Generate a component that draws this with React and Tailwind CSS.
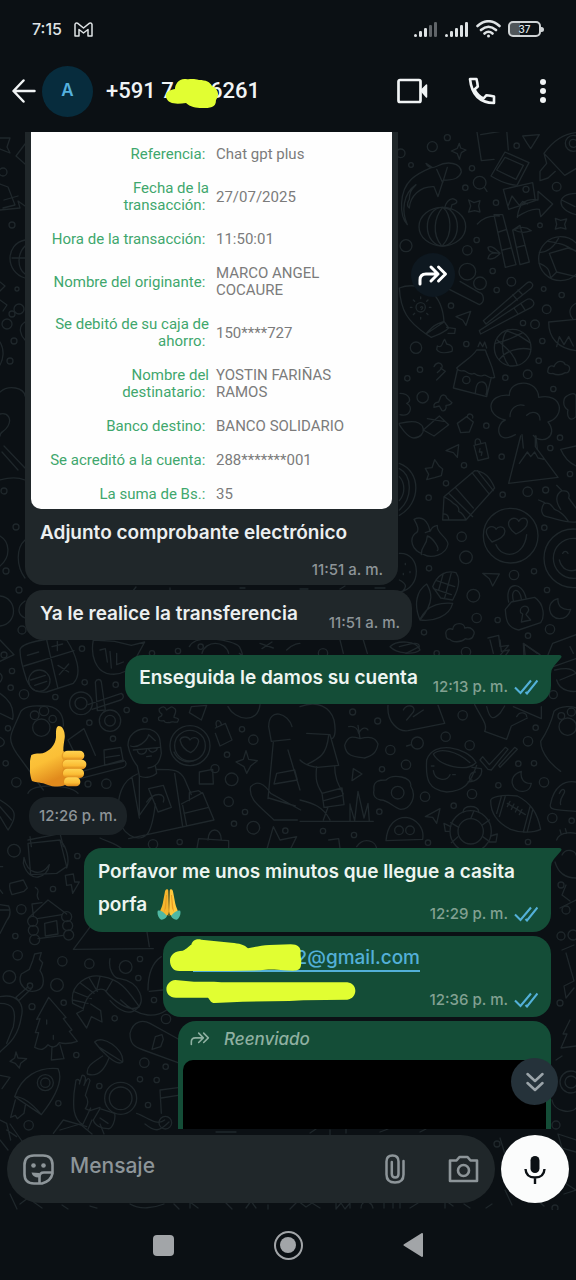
import React from "react";

const smallDots = [
  [3, 172, 4], [12, 225, 3], [12, 314, 3], [17, 289, 2], [19, 309, 5], [7, 324, 5], [14, 341, 3], [10, 361, 3],
  [4, 491, 3], [16, 527, 3], [6, 571, 3], [19, 590, 3], [22, 630, 4], [4, 655, 3],
];

function Bubbles({ items }) {
  return items.map(([x, y, r], i) => <circle key={i} cx={x} cy={y} r={r} />);
}

function Wallpaper() {
  return (
    <svg
      aria-hidden="true"
      className="absolute inset-0 size-full"
      viewBox="0 132 576 1078"
      preserveAspectRatio="xMidYMin slice"
      fill="none"
      stroke="#1f272b"
      strokeLinecap="round"
      strokeLinejoin="round"
    >
      <g strokeWidth="1.3">
        <Bubbles items={smallDots} />
        <path d="M0 138l10 0-3 9 3 6-10-4M25 144l-9 12 9 8M0 184l8 3 7 18-12 3M4 200l14-4M0 210l20-2-2-7 7 5M25 240c-20 4-20 32 0 38M25 246c-8 8-8 22 0 28M12 258h13M0 282l5 4-5 5M0 300l7 5-4 6M25 322c-8 5-4 14 0 18M0 342c5 8 3 18 0 23" />
        <path d="M0 392c9-8 24-4 25 4M0 414c8-2 12 5 8 12s-8 5-8 10M4 446l21 22M2 452l16 18M0 480c10-3 18-3 25 0M0 536c9 5 12 20 0 30M25 540c-9 8-9 26 0 38M0 596c18 2 18 28 0 30M25 601c-9 6-7 14 0 17" />
        <path d="M132 592l4-5M170 588v5M240 588h5M300 589h8M340 589l5-3M375 588h10" />
      </g>

      <g transform="translate(390 130) scale(.333333)" strokeWidth="4">
        <Bubbles
          items={[
            [127, 50, 15], [172, 23, 9], [32, 70, 13], [63, 105, 7], [246, 115, 8], [380, 47, 8], [226, 173, 8],
            [318, 218, 8], [500, 170, 13], [450, 286, 7], [48, 347, 18], [260, 330, 8], [232, 361, 14], [232, 425, 25],
            [270, 460, 19], [308, 423, 8], [364, 455, 13], [320, 480, 8], [461, 477, 7], [515, 495, 8], [470, 538, 13],
            [183, 527, 8], [399, 579, 8], [435, 583, 13], [457, 633, 8], [78, 653, 17], [229, 642, 8], [90, 719, 8],
            [52, 745, 8], [446, 692, 8], [413, 733, 13], [346, 743, 8], [98, 802, 17], [490, 777, 8], [289, 887, 8], [510, 923, 8],
          ]}
        />
        <path d="M260 0l14 92 38-4M272 14l60-10M350 0l5 60M345 66l72 32-36 68c-30-2-52-12-78-28zM345 82l55 24-22 42-58-28zM398 18l50-4-26 42-12-18zM208 40l4 14 16 6-14 8-6 20-6-17-18-8 18-8zM558 8c-40 4-70 26-96 62l62 66 34-20M462 70l8 30-20 24 0 28 24-8 22-20" />
        <path d="M108 100c10 18 22 14 34 8 30-16 70-10 72 18-6 20-30 26-54 24l-16 50-12-30C90 168 60 200 58 234c-8-6-6-16 0-26 0-20 6-30 20-44-40 28-44 80-26 120-24-26-26-100 12-136 20-20 48-30 62-36zM140 118l18 40 14-46" />
        <circle cx="269" cy="158" r="19" /><path d="M283 172l8 12M340 178l88-20 8 54-80 26zM354 228l12-30 22 28 10-12 14 8M382 262c4-40 22-58 62-52v-26l44 38-36 38-4-22c-20-4-44 8-66 22zM558 190c-60 0-60 50 0 64M515 210l40 20M236 210l16 8 18-6-4 16 4 18-16-4-18 4 6-18zM496 265l16 6 18-4-6 16 4 14-16-4-16 4 4-14z" />
        <circle cx="408" cy="178" r="9" /><circle cx="550" cy="40" r="24" /><circle cx="550" cy="40" r="12" />
        <ellipse cx="157" cy="290" rx="70" ry="58" /><ellipse cx="157" cy="290" rx="45" ry="58" /><path d="M158 232c-26 30-32 82-4 114M158 232c26 20 32 80 0 114M164 234c4-18 12-26 24-28 18 6 16 14-2 18l-4 14z" />
        <path d="M312 254l34 158 32-8-40-150zM262 282c18-20 38-26 66-24M326 306l24-8M338 360l24-6M368 300l22 104 28-8-28-110zM372 300c20-12 36-10 52 2-18 6-30 8-52-2M330 370c-16-16-26-24-36-18 0 12 14 18 36 18-20-4-34 0-36 16 16 4 26-4 36-16M380 352l24-6" />
        <circle cx="512" cy="386" r="66" /><path d="M474 334c36 4 50 10 84 30M448 368c26-2 46-20 58-44M478 370l22 56 58 14M478 370l56-16 24 8M500 426l-18 18M448 400c26 10 30 20 34 44" />
        <path d="M280 572l130-112c12-10 24 4 14 14L288 582zM268 602l140-92c16-10 34 10 16 22L272 612zM368 494l14 16M384 480l14 14M372 534l12 18M392 520l12 18" />
        <path d="M178 478l90 46c20-8 12-34 0-36l-58-34M28 474c4 70 26 100 80 138l54-36c-2-40-14-70-40-92-20-14-60-24-94-10zM108 612c20-24 30-30 54-38l14 20c-16 16-34 20-52 28zM170 592l26 4-2 14h-20" />
        <circle cx="92" cy="532" r="14" /><path d="M92 532c4-6 10 2 2 6M92 506v-5M92 562v5M66 532h-5M118 532h5M74 514l-4-4M110 514l4-4M74 550l-4 4M110 550l4 4M198 560l44-16-14 42-10-16zM142 648c16 8 14-12 22-20l6 14c14 2 20 10 16 22-18 6-38 6-46-6zM476 576l82-8M476 576c0 50 30 80 82 86M500 650l8-30 14 24 14-24 14 28M558 520c-20 10-24 30-10 46" />
        <circle cx="368" cy="653" r="55" /><path d="M316 640c34-6 60-20 82-32M328 688c20-26 60-38 94-30M352 600c-20 24-20 76 4 106M350 602l36 14 34 22M322 630c30 28 50 40 60 76" />
        <path d="M200 714c26-24 46-32 60-54l26 0c8 26 20 40 28 82M200 714c10 16 18 4 26 10s16 12 26 6c10 8 18 10 28 6s20 14 34 6M202 720l-12 54 100 26 14-58M256 790c2-30 10-36 22-34s16 20 10 38M264 650l6-14 8 14 6-14 6 18M474 720c0-14 14-14 18-10 8-20 28-20 34-6 20 0 14 28 0 24-16 10-30 6-38 2-8 2-18 0-14-10z" /><circle cx="229" cy="750" r="11" />
        <path d="M132 710c6-14 20-14 24-4s-8 14-14 22M152 714l14 10-26 26M152 800c6-8 16-6 18 4l16 14c-4 8-10 8-18 8 2 12-4 18-12 16l-8-14-16 4c-2-12 4-14 14-16z" />
        <path d="M376 914c-60 34-60-34-30-44-64-14-54-80 12-74 0-50 86-50 88 6 74-16 80 60 28 74 34 44-20 70-44 40M360 860c0-24 20-40 42-34M410 856c16-16 40-10 40 14M396 914l4 40M438 918l4 40M528 800c30-20 30 0 30 0v60c-20 20-28-4-24-20-20-14-12-36-6-40" />
        <path d="M30 790c30 0 36 26 20 30 22 10 10 42-20 34M28 880l24-4c60-10 60 46 20 48-20 0-44-40-44-40M100 900l48-42 28 26-44 34zM112 866l48 8 6 0M202 880l28-20 20 16-12 30-26 2zM232 860c0-14 20-8 16 4" />
      </g>

      <g transform="translate(390 400) scale(.333333)" strokeWidth="4">
        <Bubbles
          items={[
            [335, 170, 8], [222, 196, 8], [168, 250, 8], [116, 293, 8], [338, 284, 8], [413, 275, 14], [467, 270, 9],
            [215, 410, 14], [228, 472, 19], [117, 505, 8], [250, 587, 19], [260, 654, 14], [323, 660, 8], [372, 525, 14],
            [432, 514, 8], [471, 570, 8], [480, 688, 14], [102, 697, 8], [414, 707, 8], [463, 383, 8], [481, 144, 8], [540, 222, 8],
          ]}
        />
        <path d="M168 152l38-18-4 38-12-14zM252 136l34-8 10 46-32 8zM256 132c-4-20 14-20 16-4M270 146l-2 10 8 0-2 10M106 205l20-2 8-24 14 20 10 8-4 20-20 6-24 6 6-16zM392 108l-36 142 148-18-68-92v-32M388 190l24-34 10 14 12-14 10 18 18 4M558 138l-46 10c10 24 24 40 46 50" />
        <path d="M158 360l4-70 92-78c30 2 46 20 60 52l-86 96zM162 290c12 8 20 10 28 20 12 6 18 16 16 24 10 4 16 12 22 26M176 280l72 70M196 262l54 62M246 218l50 62M262 212l48 60M162 342c8 0 14 6 14 18M28 190c66 24 66 120 0 156M28 206c40 20 40 90 0 124M28 230c18 20 18 50 0 72" />
        <path d="M72 358c24-12 42 4 48 36 6-16 14-16 22-18-4 24 30 34 32 56-6 34-50 44-72 32-40-14-44-48-26-64 16-8 4-28-4-42zM94 464c-2-28 16-22 18-56 16 4 40 40 30 44M106 398l16-6" />
        <circle cx="362" cy="407" r="82" /><path d="M306 426c-16-16-22-34-12-42 12-8 22-2 24 4 8-12 24-8 26 2 4 16-14 28-38 36zM378 402c-20-14-28-30-18-42 10-10 24-4 26 4 8-14 24-12 26 0 2 16-16 30-34 38zM318 434c20 46 84 38 92-30" />
        <circle cx="550" cy="475" r="88" /><circle cx="550" cy="475" r="60" /><path d="M518 460c4-8 12-8 16 0M508 480c8 30 30 36 50 30M446 300l18 8c-16 20-8 40 6 42 40 10 60 20 88 16M466 310c18-4 20 12 28 18 16 6 30 18 40 34M500 256l16 16c-24 14-16 38-4 56M516 272c20 0 24 10 20 22l22 30" />
        <path d="M28 460c66-4 70 106 0 116M28 540c20 10 24 20 10 34M46 490v4M60 514v4M40 520v4M110 552c-30 20-40 60-20 108 50-60 30-90 20-108zM90 658c24-50 70-50 98-48-10 40-60 56-98 50zM128 560c14-36 40-50 70-42 18 24 2 60-10 82l-36-6zM140 542l54 18M130 566l54 18M160 520l-14 50M184 518l-20 76M278 520l50 2-20 36-10-22zM346 628l18-22 70-14c30 20 30 60 18 76l-66 22c-40-8-38-40-40-62zM356 606c-14-60 40-66 52-12M370 602c-10-40 20-40 24-6M392 638c-6-20 22-28 24-8-2 8-8 10-8 14l14 16-28 6 4-24zM504 596c-40 10-28 60 4 60 20 0 30-14 34-28-24 4-40-10-38-32zM168 704c-4-16 12-20 20-16 4-24 36-20 36-4 20-6 34 10 26 22-2 14-20 12-24 10-16 14-40 10-46 2-8 0-12-6-12-14z" />
        <path d="M294 714l32-8 4 34 26-4-26 30M400 730l2 40M400 730l50 34M558 704l-70 26-14 34M28 740c20-4 60-20 60 0l-40 20M540 740l10 20" />
      </g>

      <g transform="translate(0 640) scale(.333333)" strokeWidth="4">
        <Bubbles
          items={[
            [72, 163, 14], [32, 143, 8], [36, 93, 8], [166, 171, 8], [254, 127, 8], [347, 134, 8], [246, 26, 8], [380, 210, 8],
            [268, 248, 8], [339, 296, 8], [435, 240, 7], [24, 265, 8], [17, 370, 8], [49, 427, 14], [264, 432, 9], [319, 431, 14],
            [243, 190, 34], [243, 190, 18], [330, 242, 32], [330, 242, 16], [132, 213, 14], [158, 237, 11], [104, 226, 13], [124, 263, 26],
            [570, 317, 60], [570, 317, 46], [726, 268, 8], [760, 299, 14], [681, 344, 8], [695, 418, 19], [686, 485, 14], [735, 516, 8],
            [702, 551, 8], [760, 563, 19], [856, 572, 8], [539, 606, 8], [459, 613, 14], [602, 20, 8], [456, 40, 8], [534, 33, 8], [645, 386, 12],
          ]}
        />
        <path d="M60 30c2-20 80-40 140-30 26 40 50 100 20 130l-80 26c-40 4-50-14-60-36-10-30-20-60-20-90zM72 78l150-46M140 0l34 146M82 46l34-10M156 20l32-8M172 4v28M92 120l44-14M104 136l36-12M174 76l32 20M206 72l-28 32M0 0l42 44-42 20M0 100c12 10 4 22 0 26M0 160c30 20 44 44 38 78l-38-18M0 292c20 10 14 24 0 28" />
        <circle cx="118" cy="122" r="32" />
        <path d="M280 0c-10 50 10 90 40 100 40 10 80-10 90-50l24-44-40 10-50-12zM300 30l16-4 6 40M330 34l4 50M350 40v34l20-8M286 126c4-10 16-10 18 0l12 84-24 2zM264 194l100-34c10 6 6 18-2 20l-86 28M60 220c-24 60-44 70-10 120l80 110M60 220c6-20 40-24 62-22 50-4 70 24 68 60M204 300l48-34 34 80M204 300l20 40M210 404l160-44c12 6 10 18 0 22l-154 40M312 330l50-8 8 42-56 12zM318 352l40-6" />
        <path d="M384 316c0-60 90-66 96-14l4 38c-6 30-16 40-40 44M384 316c4 20 10 40 28 62l6 30c20 10 44 0 52-8l-4-24M392 318c20 8 50-14 54-34l20 18M400 330l80-8M412 332c4 16 26 12 28-4M446 328c6 14 24 8 26-4M440 350l14-2M412 402c-50 20-58 70-60 120 10 60 60 90 90 60 16-20 20-60 24-90M418 408l0 118 40-56M396 412l22 122M470 388c50 0 70 0 84 30l20 46M524 400l24 160M446 446l44-10 24 66-40 14zM440 486c20-30 60-30 50 0M386 596l256-56-34-82-64 34M568 482l0-24 28-6 10 8M552 520l74-18M548 496l12 62" />
        <path d="M540 300c6-14 26-10 30 0 6-10 24-10 26 4-4 20-14 28-24 34-14-6-28-20-32-38zM522 336c10 26 40 34 60 26M478 206c10-8 16-8 22 4 14-10 14-14 26-2 4 12-4 14-4 24 16 4 16 6 10 14-12 2-18-4-22 2-8-2-14 4-18-6-14 2-18 0-16-10 8-2 10-4 10-10-8-4-10-8-8-16zM574 200l46-4-16 44-36-22zM646 264l30-14 20 50-36 18-14-38M650 260c-8-22 12-24 14-6M738 332l8 26 26 4-20 16-12 22-8-20-24-14 22-8zM598 396l40-8 2 44-42 0z" />
        <path d="M806 260c0-60 60-40 70 0M806 260l8 44 56-6M820 306l-16 170M864 330l36 120M830 400l54-10 8 30-70 12zM752 440c20-20 40-10 60 20l90 50M752 440c-8 40 30 60 70 100l70 0M806 474l80 24M0 480c40 24 60 40 24 90l-24-40M0 500l34 40M84 460c10-30 120-30 150 0M84 600l100-20M90 590l4 30M180 580l10 40M590 630l6-34 90 6 0 28M624 600c0-40 40-40 40 0M800 630l20-70 20 40 50-10-20 40M300 594c20 10 50 16 70 36M568 20c20-40 130-20 150 0 20 40 0 20 0 20M606 40c10-40 70-40 80 0M780 10l40 14M786 26l30-20M860 30c20-20 40-20 40-20M684 200c20 40 90 54 96-6" />
      </g>

      <g transform="translate(300 640) scale(.333333)" strokeWidth="4">
        <Bubbles
          items={[
            [158, 216, 9], [233, 243, 9], [488, 226, 14], [352, 309, 18], [437, 290, 14], [271, 330, 14], [509, 316, 14], [318, 374, 14],
            [246, 388, 8], [375, 470, 14], [238, 515, 8], [516, 462, 14], [461, 497, 8], [595, 436, 8], [655, 371, 8], [702, 370, 8],
            [684, 304, 14], [707, 263, 8], [732, 427, 14], [757, 534, 14], [815, 542, 8], [384, 608, 8], [684, 606, 8], [162, 585, 8],
            [69, 573, 8], [297, 571, 13], [330, 571, 13], [69, 40, 14], [410, 40, 8], [498, 36, 14], [760, 164, 12], [293, 458, 19],
          ]}
        />
        <path d="M0 200c50-20 90 0 102 40 8 40 0 60-10 54M20 280l70 4 26 92-64 6C30 380 10 370 0 360M20 374c40-20 60-30 66-88M50 380c-6 50 6 60 16 80M104 378c0 40 14 60 26 84M66 460l60-16 6 50-60 8zM72 482l56-16M84 502l-14 38M150 492l0 50M0 544h220M150 494l14 48 10-88 18 80 12-44 4 54M0 480c40 10 70 20 90 60" />
        <path d="M134 316c10-32 26-26 46-20 30-8 46-4 54 16-4 24-14 34-40 42-30-4-56-4-60-38zM180 296l-6-40M146 260c20-4 28 10 30 20M176 280c10-20 24-18 28-10M160 386l26 16-30 20zM222 450c-4-30 20-30 36-30 20-20 80-10 74 18 20 30 0 70-30 70-20-4-40-30-60-28-16-2-24-14-20-30zM258 602c4-50 30-70 60-70 30 4 56 30 50 66zM376 530l44-24-10 44-12-18zM320 318l14-4" />
        <path d="M380 360c-4 60 6 90 60 96 50-4 70-20 90-80M380 360c20-60 120-40 148 8-30 30-110 10-128-26 20-20 70-10 110 26M516 382l28 4c6 20-14 40-40 40M516 420c-14 4-8-24 10-24M400 392c4 30 40 34 50 12M394 378h8M458 404h8M548 350l20 24 48-52 8 6-50 62-10-2-24-28zM596 376l48-54 8 6-52 54zM664 394c-46 14-28 64 6 60 14 0 22-12 24-24-22 2-34-14-30-36z" />
        <path d="M572 482c0-10 30-20 80-14 40 20 60 50 70 100-20 10-60 12-90 0-40-20-60-50-60-86zM604 470l-14 50M616 468l-18 62M690 500l-20 76M698 510l-16 64M622 490l54 34M622 500l8-16M634 508l8-16M646 516l8-16M658 524l8-16M782 394c-20-14-60-50-60-90 20-30 30-50 40-90 20-20 60-14 66-10M752 490c10-50 40-70 76-64M752 490c-6 20 10 20 76 24M778 460c10-20 20-10 14 0s-14 20-10 34" />
        <circle cx="803" cy="260" r="26" /><circle cx="784" cy="228" r="10" /><circle cx="814" cy="216" r="12" /><circle cx="512" cy="574" r="62" /><circle cx="512" cy="574" r="38" />
        <path d="M490 516c-4-22 48-22 46 0M452 560l-20-10 4 24 12 0M572 588l20-6-4 24-20 0M512 536l10-24M476 562l-24-14M546 556l22-16M548 590l20 14M474 590l-20 18M264 196c-4 50 30 80 60 76l110-22-20-54M310 210c10-20 40-14 30 6l-20 24M340 230l30-20M524 194c20 40 40 60 30 80l66 24 14-40 48-24M560 200c10 40 20 40 40 20l14-22M640 200l84 36 0-36M650 230c10-20 30-10 30 0M120 0l10 40M190 0l12 40M270 20c20-20 80-20 90 10-20 16-70 10-90-10zM570 0l10 40M600 0l4 34 24-4-14 20M672 12l4 40M672 12l40 28M760 80l68-24M764 90c20-4 50-10 64 10M770 120c10 40 58 34 58 34M780 120l48-20M86 600l30-4 4 30M170 620c20-30 60-20 60 10M770 600c10-30 58-20 58-20M780 570l4 14M796 566l4 14" />
      </g>

      <g transform="translate(0 840) scale(.333333)" strokeWidth="4">
        <Bubbles
          items={[
            [42, 32, 19], [232, 48, 8], [159, 147, 8], [64, 208, 14], [46, 288, 8], [53, 346, 14], [28, 411, 19], [187, 364, 14],
            [268, 371, 14], [377, 381, 19], [420, 357, 8], [415, 414, 8], [171, 435, 19], [90, 437, 8], [96, 500, 9], [191, 488, 8],
            [462, 480, 8], [344, 535, 8], [498, 537, 14], [229, 645, 8], [433, 668, 14], [497, 680, 8], [420, 718, 8], [470, 720, 8],
            [298, 738, 8], [175, 790, 8], [86, 856, 14], [444, 795, 8], [136, 728, 24], [136, 728, 14], [362, 775, 48], [362, 775, 34],
            [98, 244, 15], [100, 271, 15], [104, 299, 15], [200, 230, 15], [203, 257, 15], [206, 285, 15],
          ]}
        />
        <path d="M84 10l96-10 20 80-30 20-78 4zM180 0c20 20 30 60 20 84M72 52c10 50 50 60 76 22-4 40-60 60-78-4zM30 130l40-10 12 24-10 10-36 10c-6-14-10-20-6-34zM196 106l24-4 4 24 14 0-20 34-4-26-14 2zM106 142c20 12-4 20 10 36M96 192l30-4M96 192l4 34M88 232l56-52 56 42M134 250l36-8 4 40-38 6zM112 236l74-12M114 296l76-10M0 194l26 4c6 14 6 30-6 44L0 280M0 210h30M0 80l8 0M0 150l8 10M220 328l60-80M220 328l240-2M440 270l8 50M330 356c-6 30 10 60 30 60 60 10 80 70 50 90-20 20-50 10-80-24" />
        <path d="M104 342l20-4-6 20 10 10-8 24c10 14 20 50-10 60-30 10-60-20-46-50l24-14 10-26zM84 440l-36 32 8 10 38-36M0 470c50-10 74 20 64 60-10 70-50 90-64 106M0 490c40 0 50 20 40 70l-20 50M146 472l-36 66 10-2-14 42 10 0-12 44c20 10 28 8 40-8 10 10 24 10 34-6 14 4 30 4 54-4l-24-30 8-4-26-34 8-4zM156 620l-2 40 38-4-12-42M140 540v12M160 586v12M48 636l6 18 26 2-18 14-4 14-12-14-16-6 14-10z" />
        <path d="M218 490c-10-60 50-90 90-80 60 10 80 50 110 90-30 20-80-20-104-50-20-10-54 10-64 56zM218 480l46 10M224 456l50 20M242 430l40 30M268 414l24 40M300 410l-10 40M338 420l-20 34M250 510l-20 10 30 44 14-34 32 16-4-34-30-20M362 480c60 60 110 50 138 30M444 450c0-40 10-80 40-100M448 454l40-4" />
        <path d="M390 580c10-40 40-40 60-30l90 50M390 580c0 30 10 40 40 50l110 40M466 590l20-6 4 14-8 22-26 8zM284 606c20-24 90 20 84 60-20 16-70-40-84-60zM298 622l70 44M308 648c-30 20-50 30-46 54 30 10 50-10 64-46M44 770c20-60 70-90 130-84 20 40-20 100-50 138zM44 770c30 0 60 30 80 54M46 780l-14 52 14-6 6 10 20-16 4-24M0 706l30 6-24 34" />
        <path d="M222 760l6-40c8-4 14 2 10 12l8-26c10-2 14 8 6 30 10-24 14-24 18-14l-14 44c16 20 0 40 0 40l14 6 30-10M222 760c0 20-10 70 26 94l24-50M280 840l20-34 44 14c4 20-8 48-20 46-20 0-40-10-44-26zM300 834l24 16M410 820c30 10 60 40 84 20M264 868l12-28M160 880l30-40 70 20M480 750l60-8M480 750l4 70M484 774l50-8M0 840l20 10 12 50M20 870l30 20" /><circle cx="496" cy="848" r="19" />
      </g>

      <g strokeWidth="1.3">
        <Bubbles items={[[561, 885, 3], [566, 910, 4], [573, 935, 5], [561, 936, 4], [556, 1125, 4], [560, 1003, 3], [571, 1082, 6], [571, 1082, 11], [497, 1144, 3], [555, 1208, 3]]} />
        <path d="M562 855c4-8 14-4 14 0M555 862c4 14 14 16 21 16M566 885l-4 10 8 6M560 908l16-8M562 950l12-5M566 953l8 28-10 5 2 12 8-10M570 1020l-7 14 4 0-6 14 15-2M552 1100c2 12 20 14 24 8M556 1060l6-4M576 1140l-18-6 4 14 14 4M500 1138l8 26 10-8 4 20M560 1180l16 10-12 4M505 1190l7 15M520 1186l24 20" />
        <path d="M0 1140l8 10M10 1124l14 20M60 1130l20-6 12 10M100 1124l4 10M145 1124c10 8 14 8 24-2M10 1194l7 15M20 1204l8-6 14 10M62 1205l6 4M90 1206l7 2M130 1204c10 6 24 4 34 0M174 1204l5 5M190 1208v-6l8 6M226 1203l6 6M246 1208l5-7 5 7M268 1205v4M290 1209l8-8 8 6 6-4 8 5M336 1203v6l5-6 4 6 5-6v5M361 1208c0-8 10-8 12 0M384 1208v-5M393 1208v-6h7v6M410 1208l8-5M445 1208v-8l8 6M464 1204l6 4M486 1208l6-4M216 1132h20M310 1133l6-4M330 1130v5M346 1133v-4M380 1132l8-3M420 1132l6-3" />
      </g>
    </svg>
  );
}

function Ticks() {
  return (
    <svg className="h-4 w-6 shrink-0" viewBox="0 0 24 16" fill="none" stroke="#53b0d8" strokeWidth="2.1" role="img" aria-label="Leído">
      <path d="M1 8.500l5.500 5.500L17 1.500M11.500 13l1.500 1.500L23.500 1.500" />
    </svg>
  );
}

function Time({ children, read }) {
  return (
    <span className={read ? "flex shrink-0 items-center gap-[6px] text-[#82a192]" : "flex shrink-0 items-center text-[#8d9498]"}>
      <time className="text-[15px] leading-[18px] font-medium whitespace-nowrap">{children}</time>
      {read && <Ticks />}
    </span>
  );
}

function Tail() {
  return (
    <svg className="absolute top-0 left-full h-[19px] w-[11px]" viewBox="0 0 11 19" fill="#144d37" aria-hidden="true">
      <path d="M-1 0H8.500Q12 .5 9.500 3.500L3 11Q0 14.500 0 19H-1z" />
    </svg>
  );
}

function ThumbsUp() {
  return (
    <svg className="mt-[22px] ml-[5px] h-[61px] w-[57px]" viewBox="88 258 171 183" role="img" aria-label="Pulgar arriba">
      <defs>
        <linearGradient id="palm" x1="0" y1="0" x2=".3" y2="1">
          <stop offset="0" stopColor="#ffd04a" />
          <stop offset=".65" stopColor="#fbbf36" />
          <stop offset="1" stopColor="#e18a1c" />
        </linearGradient>
        <linearGradient id="finger" x1="0" y1="0" x2="0" y2="1">
          <stop offset="0" stopColor="#ffd453" />
          <stop offset=".6" stopColor="#fbbd35" />
          <stop offset="1" stopColor="#d98317" />
        </linearGradient>
      </defs>
      <path fill="url(#palm)" d="M92 345c10-5 24-4 34-5 22-7 38-25 40-48 0-16-1-32 8-34 14 0 20 20 18 36-2 14-4 24-4 38l12 20v78c-10 12-40 12-60 4-16-7-34-6-46-11-8-20-10-54-2-78z" />
      <path fill="#d88a1c" opacity=".55" d="M190 334c-10 8-8 20-2 26-6 10-6 18 0 26-6 10-4 18 2 24-4 8-2 18 4 26l12-2V336z" />
      <rect x="187" y="332" width="64" height="29" rx="14" fill="url(#finger)" />
      <rect x="186" y="359" width="71" height="29" rx="14" fill="url(#finger)" />
      <rect x="187" y="386" width="63" height="28" rx="13" fill="url(#finger)" />
      <rect x="190" y="412" width="49" height="27" rx="13" fill="url(#finger)" />
    </svg>
  );
}

function FoldedHands() {
  return (
    <svg className="h-[31px] w-6" viewBox="0 0 72 94" role="img" aria-label="Manos juntas">
      <path fill="#f5b62e" d="M33 2c-6-3-9 2-10 10l-6 32c-2 10-6 16-8 24l14 16c8-2 12-8 13-16z" />
      <path fill="#ffc93d" d="M39 2c6-3 9 2 10 10l6 32c2 10 6 16 8 24L49 84c-8-2-12-8-13-16z" />
      <path fill="#d98a1d" d="M35 4h2v78h-2z" />
      <path fill="#e89c23" d="M27 18l3 0-3 40-6 12 2-14zM45 18l-3 0 3 40 6 12-2-14z" />
      <path fill="#4fb8a3" d="M2 66c8-4 18 4 28 16-4 8-10 11-18 11C4 88-1 76 2 66zM70 66c-8-4-18 4-28 16 4 8 10 11 18 11 8-5 13-17 10-27z" />
    </svg>
  );
}

function ForwardIcon({ className, width }) {
  return (
    <svg className={className} viewBox="0 0 30 22" fill="none" stroke="currentColor" strokeWidth={width} strokeLinecap="round" strokeLinejoin="round" aria-hidden="true">
      <path d="M2 20v-4q0-6 6-6h12M13 3l7 7-7 7M20.500 3l7 7-7 7" />
    </svg>
  );
}

const receipt = [
  [["Referencia:"], ["Chat gpt plus"]],
  [["Fecha de la", "transacción:"], ["27/07/2025"]],
  [["Hora de la transacción:"], ["11:50:01"]],
  [["Nombre del originante:"], ["MARCO ANGEL", "COCAURE"]],
  [["Se debitó de su caja de", "ahorro:"], ["150****727"]],
  [["Nombre del", "destinatario:"], ["YOSTIN FARIÑAS", "RAMOS"]],
  [["Banco destino:"], ["BANCO SOLIDARIO"]],
  [["Se acreditó a la cuenta:"], ["288*******001"]],
  [["La suma de Bs.:"], ["35"]],
];

function Receipt() {
  return (
    <div className="rounded-b-[10px] bg-[#fefefe] pt-[14px] pb-[6px]">
      <table className="w-full font-[Roboto,sans-serif] text-[15px] leading-[17px]">
        <tbody>
          {receipt.map(([label, value]) => (
            <tr key={label[0]} className="group">
              <th scope="row" className="w-[178px] p-0 pb-[17px] text-right align-middle font-normal whitespace-nowrap text-[#3fa76d] group-last:pb-0">
                {label.map((line) => (
                  <span key={line} className="block">{line.endsWith(":") ? line + "\u00a0" : line}</span>
                ))}
              </th>
              <td className="p-0 pb-[17px] pl-[7px] align-middle text-[#7b7b7b] group-last:pb-0">
                {value.map((line) => (
                  <span key={line} className="block">{line}</span>
                ))}
              </td>
            </tr>
          ))}
        </tbody>
      </table>
    </div>
  );
}

function StatusBar() {
  return (
    <div className="flex h-[58px] items-center pr-8 pl-8 text-[#dfe3e5]">
      <span className="text-[16px] leading-5 font-medium">7:15</span>
      <svg className="ml-3 h-[15px] w-[19px]" viewBox="0 0 19 15" fill="none" stroke="currentColor" strokeWidth="1.500" strokeLinejoin="round" aria-label="Gmail" role="img">
        <path d="M1 14V2.500Q1.500.5 3.500 1.200L9.500 6l6-4.800Q17.500.5 18 2.500V14h-4V7.500L9.500 11 5 7.500V14z" />
      </svg>
      <div className="ml-auto flex items-center gap-[7px]">
        <svg className="h-4 w-6" viewBox="0 0 24 16" fill="currentColor" aria-hidden="true">
          <rect x="0" y="13" width="3" height="3" rx="1.500" /><rect x="5" y="10" width="3" height="6" rx="1.300" /><rect x="10" y="7" width="3" height="9" rx="1.300" />
          <g opacity=".4"><rect x="15" y="4" width="3" height="12" rx="1.300" /><rect x="20" y="1" width="3" height="15" rx="1.300" /></g>
        </svg>
        <svg className="h-4 w-6" viewBox="0 0 24 16" fill="currentColor" aria-hidden="true">
          <rect x="0" y="13" width="3" height="3" rx="1.500" /><rect x="5" y="10" width="3" height="6" rx="1.300" /><rect x="10" y="7" width="3" height="9" rx="1.300" /><rect x="15" y="4" width="3" height="12" rx="1.300" /><rect x="20" y="1" width="3" height="15" rx="1.300" />
        </svg>
        <svg className="h-[18px] w-[25px]" viewBox="0 0 25 18" fill="none" stroke="currentColor" strokeWidth="2.600" strokeLinecap="round" aria-hidden="true">
          <path d="M1.500 6Q12.500-3.500 23.500 6M5 10Q12.500 3.500 20 10M8.500 13.500q4-3.500 8 0" /><circle cx="12.500" cy="16" r="1.500" fill="currentColor" stroke="none" />
        </svg>
        <div className="flex items-center">
          <span className="flex h-4 w-[33px] items-center justify-center rounded-[5px] border-2 border-[#cfd3d5] bg-linear-to-r from-[#50565a] from-35% to-transparent to-35% text-[10px] leading-3 font-medium">37</span>
          <span className="h-[5px] w-[3px] rounded-r bg-[#cfd3d5]" />
        </div>
      </div>
    </div>
  );
}

function Header() {
  return (
    <header className="flex h-[66px] items-center pr-[19px] pl-[12px] text-[#f1f4f5]">
      <button type="button" aria-label="Atrás" className="w-[30px]">
        <svg className="h-6 w-6" viewBox="0 0 24 24" fill="none" stroke="currentColor" strokeWidth="2.500" strokeLinecap="round" strokeLinejoin="round">
          <path d="M22.500 12H2M11.500 1.500L1.500 12l10 10.500" />
        </svg>
      </button>
      <div className="flex size-[51px] items-center justify-center rounded-full bg-[#072c3d] text-[17px] font-semibold text-[#55b1dd]">A</div>
      <h1 className="relative ml-[13px] flex w-[154px] justify-between font-[Roboto,sans-serif] text-[22px] leading-7 font-medium">
        <span>+591 7</span>
        <span>6261</span>
        <svg className="absolute top-0 left-[59px] h-[31px] w-[54px]" viewBox="0 0 54 31" fill="#e1fe32" aria-hidden="true">
          <path d="M1 20C0 14 6 13 10 12c0-5 4-11 11-10 3 1 6-1 13 1 7 0 11 2 13 6 6 3 8 8 4 14 0 8-6 8-14 8-6 0-12-1-16-5-8 1-18 2-20-6z" />
        </svg>
      </h1>
      <div className="ml-auto flex items-center">
        <button type="button" aria-label="Videollamada">
          <svg className="h-[26px] w-[31px]" viewBox="0 0 31 26" fill="none" stroke="currentColor" strokeWidth="2.700" strokeLinejoin="round">
            <rect x="1.500" y="2" width="22" height="22" rx="1.500" />
            <path d="M24 12.500L29.500 7v12z" fill="currentColor" strokeWidth="1.500" />
          </svg>
        </button>
        <button type="button" aria-label="Llamar" className="ml-10">
          <svg className="size-7" viewBox="0 0 28 28" fill="none" stroke="currentColor" strokeWidth="2.600" strokeLinejoin="round">
            <path d="M2 2h6.500q1 4 1.300 7.500L6.500 12.500Q10 19 15.500 21.500l3-3.300q4 .2 7.500 1.300V26Q4.500 25.500 2 2z" />
          </svg>
        </button>
        <button type="button" aria-label="Más opciones" className="ml-[33px] flex w-7 justify-center">
          <svg className="h-6 w-2" viewBox="0 0 8 24" fill="currentColor"><circle cx="4" cy="3" r="3" /><circle cx="4" cy="12" r="3" /><circle cx="4" cy="21" r="3" /></svg>
        </button>
      </div>
    </header>
  );
}

function Composer() {
  return (
    <form className="relative flex items-center gap-[6px] px-[7px] pt-[6px] pb-[7px]" onSubmit={(e) => e.preventDefault()}>
      <div className="flex h-[68px] min-w-0 flex-1 items-center rounded-full bg-[#20272a] pr-4 pl-4 text-[#8d9599]">
        <button type="button" aria-label="Stickers">
          <svg className="size-[31px]" viewBox="0 0 31 31" fill="none" stroke="currentColor" strokeWidth="2.600" strokeLinejoin="round">
            <path d="M19 29.500H11Q1.500 29.500 1.500 20V11Q1.500 1.500 11 1.500h9Q29.500 1.500 29.500 11v8.500Q28 27 19 29.500zM16.500 29V23q0-4.500 4.500-4.500h8" />
            <path d="M8.500 18.500q1.500 5.500 8 5v-4.500z" fill="currentColor" stroke="none" />
            <circle cx="10.500" cy="11.500" r="2.300" fill="currentColor" stroke="none" /><circle cx="20.500" cy="11.500" r="2.300" fill="currentColor" stroke="none" />
          </svg>
        </button>
        <input
          type="text"
          aria-label="Mensaje"
          placeholder="Mensaje"
          className="mb-[6px] ml-4 min-w-0 flex-1 bg-transparent text-[21px] leading-7 font-medium outline-none placeholder:text-[#8d9599]"
        />
        <button type="button" aria-label="Adjuntar" className="mr-[43px]">
          <svg className="h-[30px] w-5" viewBox="0 0 20 30" fill="none" stroke="currentColor" strokeWidth="2.500" strokeLinecap="round">
            <path d="M18.500 7v13.500q0 8-8.500 8t-8.500-8V7.500q0-6 6-6t6 6V20q0 3.500-3.300 3.500T6.800 20V8" />
          </svg>
        </button>
        <button type="button" aria-label="Cámara">
          <svg className="h-7 w-[31px]" viewBox="0 0 31 28" fill="none" stroke="currentColor" strokeWidth="2.600" strokeLinejoin="round">
            <path d="M2 5.500h6.500L11.500 2h8l3 3.500H29V26H2z" /><circle cx="15.500" cy="15.500" r="5.500" />
          </svg>
        </button>
      </div>
      <button type="button" aria-label="Grabar mensaje de voz" className="flex size-[68px] shrink-0 items-center justify-center rounded-full bg-[#fbfcfc] text-[#0b1014]">
        <svg className="h-[29px] w-[22px]" viewBox="0 0 22 29" fill="none" stroke="currentColor" strokeWidth="2.400">
          <rect x="6.500" y="1" width="9" height="17" rx="4.500" fill="currentColor" stroke="none" />
          <path d="M1.500 14q.5 8.500 9.500 8.500t9.500-8.500M11 22.500V29" />
        </svg>
      </button>
    </form>
  );
}

const sent = "relative ml-auto max-w-full bg-[#144d37] text-[#eef5f1]";
const messageText = "text-[19px] font-semibold";

export default function App() {
  return (
    <div className="flex min-h-screen flex-col bg-[#0b1014] font-[Inter,sans-serif]">
      <StatusBar />
      <Header />
      <div className="relative mt-2 flex flex-1 flex-col">
        <Wallpaper />
        <main className="relative flex flex-1 flex-col px-[25px]">
          <div className="flex items-start gap-[13px]">
            <article className="w-[373px] rounded-b-[18px] bg-[#20272a] pb-[6px] text-[#eceff0]">
              <div className="px-[6px]">
                <Receipt />
              </div>
              <p className={`${messageText} mt-3 px-[15px] leading-6`}>Adjunto comprobante electrónico</p>
              <div className="mt-4 flex justify-end px-[15px]">
                <Time>11:51 a. m.</Time>
              </div>
            </article>
            <button type="button" aria-label="Reenviar" className="mt-[121px] flex size-11 shrink-0 items-center justify-center rounded-full bg-[#0e1820] text-white">
              <ForwardIcon className="h-[22px] w-[30px]" width="3" />
            </button>
          </div>

          <article className="mt-[5px] flex w-fit items-end gap-[31px] rounded-[18px] bg-[#20272a] pt-3 pr-[12px] pb-2 pl-[15px] text-[#eceff0]">
            <p className={`${messageText} mb-[6px] leading-6`}>Ya le realice la transferencia</p>
            <Time>11:51 a. m.</Time>
          </article>

          <article className={`${sent} mt-[15px] flex w-fit items-end gap-[15px] rounded-[18px] rounded-tr-none pt-[11px] pr-[13px] pb-2 pl-[14px]`}>
            <p className={`${messageText} mb-[6px] leading-6`}>Enseguida le damos su cuenta</p>
            <Time read>12:13 p. m.</Time>
            <Tail />
          </article>

          <ThumbsUp />
          <div className="mt-[10px] ml-1 flex h-[38px] w-fit items-center rounded-[18px] bg-[#1b2226] px-[10px]">
            <Time>12:26 p. m.</Time>
          </div>

          <article className={`${sent} mt-[13px] w-[467px] rounded-[18px] rounded-tr-none pt-[7px] pr-[13px] pb-[9px] pl-[14px]`}>
            <p className={`${messageText} leading-[33px]`}>Porfavor me unos minutos que llegue a casita</p>
            <div className="flex h-[35px] items-end justify-between">
              <p className={`${messageText} flex items-center gap-[10px] self-start leading-[33px]`}>
                <span>porfa</span>
                <FoldedHands />
              </p>
              <Time read>12:29 p. m.</Time>
            </div>
            <Tail />
          </article>

          <article className={`${sent} mt-1 flex h-[81px] w-[388px] flex-col justify-between rounded-[18px] pt-[10px] pr-[13px] pb-[8px] pl-[14px]`}>
            <a href="mailto:" className="ml-[16px] w-[227px] border-b-2 border-[#53b0d8] text-right text-[19px] leading-6 font-medium text-[#53b0d8]">2@gmail.com</a>
            <div className="self-end">
              <Time read>12:36 p. m.</Time>
            </div>
            <svg className="absolute inset-0 size-full" viewBox="279 288 1164 243" fill="#e1fe32" aria-hidden="true">
              <path d="M300 362c0-18 16-30 38-30 14-6 20-16 26-18 4-14 16-18 30-15l90 9c24 2 40 6 50 17 20-4 40-9 64-10l64-2c22 0 30 10 30 22-2 14 4 24 1 40-1 14-10 17-24 17l-28-1c-20-3-50-4-70 0l-96 2H328c-20 0-28-16-28-31z" />
              <path d="M316 420l56 5 60 0 22 2h378c34 4 30 50 0 52l-132 2-42 2-140 2-84 4c-12 0-14-10-20-16h-96c-40-2-36-50-2-53z" />
            </svg>
          </article>

          <article className={`${sent} mt-1 w-[373px] overflow-hidden rounded-t-[18px] px-[5px]`}>
            <div className="flex h-[39px] items-center gap-[14px] px-[7px] pb-1 text-[#8fb0a1]">
              <ForwardIcon className="h-[15px] w-5" width="2.4" />
              <span className="text-[17px] leading-5 font-medium italic">Reenviado</span>
            </div>
            <div className="h-[69px] rounded-t-[10px] bg-black" />
          </article>

          <button type="button" aria-label="Ir al último mensaje" className="absolute right-[18px] bottom-6 flex size-[47px] items-center justify-center rounded-full bg-[#25323a] text-[#9ba4a9]">
            <svg className="h-5 w-[18px]" viewBox="0 0 18 20" fill="none" stroke="currentColor" strokeWidth="2.500" strokeLinecap="round" strokeLinejoin="round">
              <path d="M1.500 2L9 9l7.500-7M1.500 11L9 18l7.500-7" />
            </svg>
          </button>
        </main>
        <Composer />
      </div>

      <nav className="mx-auto grid h-[70px] w-[375px] grid-cols-3 place-items-center text-[#a2a5a8]">
        <button type="button" aria-label="Recientes" className="size-[21px] rounded bg-[#a2a5a8]" />
        <button type="button" aria-label="Inicio" className="flex size-[29px] items-center justify-center rounded-full border-2 border-[#a2a5a8]">
          <span className="size-4 rounded-full bg-[#a2a5a8]" />
        </button>
        <button type="button" aria-label="Volver">
          <svg className="h-6 w-5" viewBox="0 0 20 24" fill="currentColor" stroke="currentColor" strokeWidth="2" strokeLinejoin="round"><path d="M1.500 12L19 1v22z" /></svg>
        </button>
      </nav>
    </div>
  );
}
